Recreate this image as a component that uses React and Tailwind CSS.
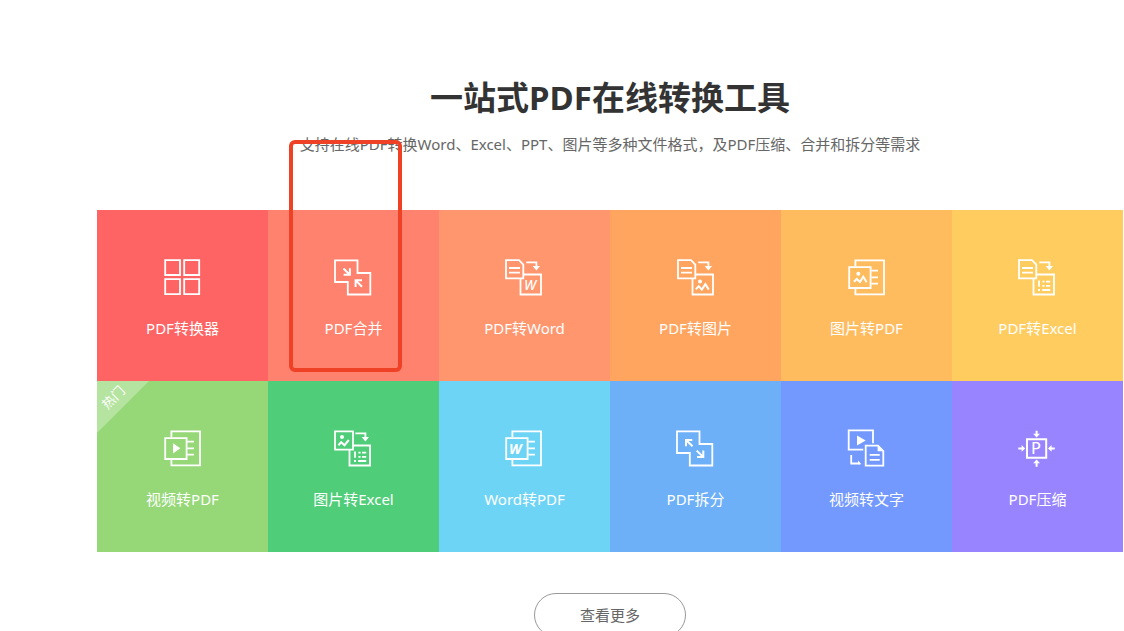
import React from 'react';

// Small pieces shared by several icons
const Doc = () => (
  <>
    <path d="M2 3.2H15L19.3 7.6V21.4H2Z" />
    <path d="M5 11H16M5 15.7H16" />
  </>
);

const TurnArrow = () => (
  <>
    <path d="M22.3 5.4H32.4V10" />
    <path d="M28.7 9H36L32.4 13.4Z" fill="currentColor" stroke="none" />
  </>
);

const TargetBox = () => <path d="M16.5 22V37.5H37V17.5H20" />;

const List = () => (
  <path
    d="M22 23.6V29.8M25.4 24.7H27.6M29 24.7H33.2M25.4 28.8H27.6M29 28.8H33.2M21 33H23M25.2 33H33.2"
    strokeWidth="1.8"
  />
);

const Book = () => (
  <>
    <path d="M9.4 9.5V3.4H38V37.4H9.4V31.5" />
    <path d="M3.2 10.1H24.6V31H3.2Z" />
    <path d="M25.3 13.7H32M25.3 20.3H32M25.3 26.7H32" />
  </>
);

const Steps = () => <path d="M2 3.4H24.5V16H37.3V37.5H14.8V25H2Z" />;

const ConverterIcon = () => (
  <>
    <path d="M3.2 3.2H18V18H3.2ZM22.2 3.2H37.2V18H22.2Z" />
    <path d="M3.2 22.2H18V37.2H3.2ZM22.2 22.2H37.2V37.2H22.2Z" />
  </>
);

const MergeIcon = () => (
  <>
    <Steps />
    <path d="M10.5 11.5L16.5 17.5M16.9 11.3V17.8H10.6" strokeWidth="2" />
    <path d="M29 29.8L23 23.6M22.6 30V23.2H29" strokeWidth="2" />
  </>
);

const SplitIcon = () => (
  <>
    <Steps />
    <path d="M17.5 18.3L11.4 12.2M11 18.3V12H17.3" strokeWidth="2" />
    <path d="M21.7 22.6L28 28.8M28.3 22.4V29H22" strokeWidth="2" />
  </>
);

const PdfToWordIcon = () => (
  <>
    <Doc />
    <TurnArrow />
    <TargetBox />
    <text x="20" y="33" fontSize="14" fontWeight="500" fontStyle="italic" fill="currentColor" stroke="none" fontFamily="Noto Sans, sans-serif">W</text>
  </>
);

const PdfToImageIcon = () => (
  <g transform="translate(1 0)">
    <Doc />
    <TurnArrow />
    <TargetBox />
    <circle cx="24" cy="24.4" r="2" fill="currentColor" stroke="none" />
    <path d="M19.8 32.4L22.7 29.2L25.8 32.6L29.4 27.2L32.8 32.6" strokeWidth="2" />
  </g>
);

const ImageToPdfIcon = () => (
  <>
    <Book />
    <circle cx="12.3" cy="16.8" r="2" fill="currentColor" stroke="none" />
    <path d="M8 24.8L10.8 22L14 25L17.3 19.6L20.6 25.2" strokeWidth="2" />
  </>
);

const PdfToExcelIcon = () => (
  <>
    <Doc />
    <TurnArrow />
    <TargetBox />
    <List />
  </>
);

const VideoToPdfIcon = () => (
  <>
    <Book />
    <path d="M11 15.3V25.4L18.4 20.3Z" fill="currentColor" stroke="none" />
  </>
);

const ImageToExcelIcon = () => (
  <>
    <path d="M2 3.4H20V21.6H2Z" />
    <circle cx="9" cy="8.9" r="2" fill="currentColor" stroke="none" />
    <path d="M5.4 17.2L8.2 14.2L11.5 17.2L15.8 12" strokeWidth="2" />
    <TurnArrow />
    <TargetBox />
    <List />
  </>
);

const WordToPdfIcon = () => (
  <g transform="translate(-1 0)">
    <Book />
    <text x="6" y="26" fontSize="14" fontWeight="700" fontStyle="italic" fill="currentColor" stroke="none" fontFamily="Noto Sans, sans-serif">W</text>
  </g>
);

const VideoToTextIcon = () => (
  <>
    <path d="M17.3 21.6H2.7V2.4H27V15.3" />
    <path d="M11 7.6V17.4L19.7 12.4Z" fill="currentColor" stroke="none" />
    <path d="M19.7 17.7H32L37.3 23V37.6H19.7Z" />
    <path d="M31.6 17V23.2H38Z" fill="currentColor" stroke="none" />
    <path d="M23.7 26.9H33.7M23.7 31.9H33.7" />
    <path d="M5.2 27V35.5H14" />
    <path d="M12 32.4L15.4 36.2H12Z" fill="currentColor" stroke="none" />
  </>
);

const CompressIcon = () => (
  <>
    <path d="M10 11.2H29.2V29.8H10Z" strokeWidth="2" />
    <path d="M19.6 2.7V7M19.6 38.7V34M1.3 20.4H5.5M37.8 20.4H33.5" strokeWidth="2" />
    <path
      d="M16.2 5.8H23L19.6 9.4ZM16.2 35.2H23L19.6 31.6ZM4.6 17V23.8L8.2 20.4ZM34.6 17V23.8L31 20.4Z"
      fill="currentColor"
      stroke="none"
    />
    <text x="14" y="26" fontSize="16" fill="currentColor" stroke="none" fontFamily="DejaVu Sans, sans-serif">P</text>
  </>
);

const tools = [
  { name: 'PDF转换器', icon: ConverterIcon, color: 'bg-[#ff6464]' },
  { name: 'PDF合并', icon: MergeIcon, color: 'bg-[#ff826e]', marked: true },
  { name: 'PDF转Word', icon: PdfToWordIcon, color: 'bg-[#ff966e]' },
  { name: 'PDF转图片', icon: PdfToImageIcon, color: 'bg-[#ffa55f]' },
  { name: '图片转PDF', icon: ImageToPdfIcon, color: 'bg-[#ffbc5f]' },
  { name: 'PDF转Excel', icon: PdfToExcelIcon, color: 'bg-[#ffcc5f]' },
  { name: '视频转PDF', icon: VideoToPdfIcon, color: 'bg-[#96d778]', hot: true },
  { name: '图片转Excel', icon: ImageToExcelIcon, color: 'bg-[#4fcd78]' },
  { name: 'Word转PDF', icon: WordToPdfIcon, color: 'bg-[#6ed4f5]' },
  { name: 'PDF拆分', icon: SplitIcon, color: 'bg-[#6eb0f8]' },
  { name: '视频转文字', icon: VideoToTextIcon, color: 'bg-[#7399ff]' },
  { name: 'PDF压缩', icon: CompressIcon, color: 'bg-[#9984ff]' },
];

const HotRibbon = () => (
  <span className="absolute left-0 top-0 h-[52px] w-[52px] bg-white/30 [clip-path:polygon(0_0,100%_0,0_100%)]">
    <span className="flex h-[34px] w-[34px] -rotate-45 items-center justify-center whitespace-nowrap text-[13px] text-white">
      热门
    </span>
  </span>
);

const ToolTile = ({ tool }) => (
  <a
    href="#"
    className={`relative flex aspect-square flex-col items-center gap-5 pt-[47px] text-white ${tool.color}`}
  >
    <svg
      viewBox="0 0 41 41"
      className="h-[41px] w-[41px]"
      fill="none"
      stroke="currentColor"
      strokeWidth="1.8"
      aria-hidden="true"
    >
      <tool.icon />
    </svg>
    <span className="text-[15px] leading-5">{tool.name}</span>
    {tool.hot && <HotRibbon />}
    {/* Frame that points out the tool */}
    {tool.marked && (
      <span className="absolute -top-[70px] left-[21px] z-10 h-[232px] w-[113px] rounded-md border-4 border-[#ee4125]" />
    )}
  </a>
);

const App = () => {
  return (
    <main className="min-h-screen bg-white pl-[97px] pr-px pt-[79px] font-['Noto_Sans','Noto_Sans_CJK_SC',sans-serif]">
      <header className="text-center">
        <h1 className="text-[33px] font-bold leading-[38px] text-[#333]">一站式PDF在线转换工具</h1>
        <p className="mt-[15px] text-[15px] leading-6 text-[#666]">
          支持在线PDF转换Word、Excel、PPT、图片等多种文件格式，及PDF压缩、合并和拆分等需求
        </p>
      </header>

      <nav className="mt-[54px] grid grid-cols-6">
        {tools.map((tool) => (
          <ToolTile key={tool.name} tool={tool} />
        ))}
      </nav>

      <div className="mt-[41px] flex justify-center">
        <button
          type="button"
          className="h-11 w-[152px] rounded-full border border-[#999] text-[15px] text-[#666]"
        >
          查看更多
        </button>
      </div>
    </main>
  );
};

export default App;
